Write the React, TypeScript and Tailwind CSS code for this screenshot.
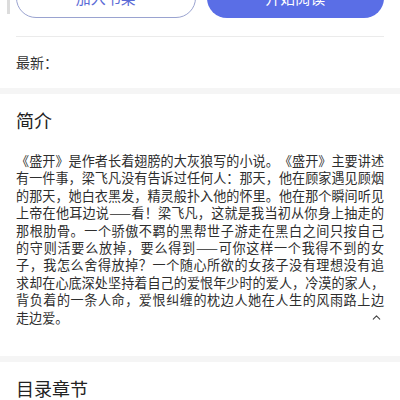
import { ChevronUp } from "lucide-react";

// intro is laid out line by line to keep the same breaks as the app
const INTRO_LINES = [
  "《盛开》是作者长着翅膀的大灰狼写的小说。《盛开》主要讲述",
  "有一件事，梁飞凡没有告诉过任何人：那天，他在顾家遇见顾烟",
  "的那天，她白衣黑发，精灵般扑入他的怀里。他在那个瞬间听见",
  "上帝在他耳边说——看！梁飞凡，这就是我当初从你身上抽走的",
  "那根肋骨。一个骄傲不羁的黑帮世子游走在黑白之间只按自己",
  "的守则活要么放掉，要么得到——可你这样一个我得不到的女",
  "子，我怎么舍得放掉？一个随心所欲的女孩子没有理想没有追",
  "求却在心底深处坚持着自己的爱恨年少时的爱人，冷漠的家人，",
  "背负着的一条人命，爱恨纠缠的枕边人她在人生的风雨路上边",
];
const INTRO_LAST = "走边爱。";

export default function App() {
  return (
    <div
      className="relative w-[400px] h-[400px] overflow-hidden bg-white text-[#333]"
      style={{ fontFamily: '"Noto Sans CJK SC", "Noto Sans", sans-serif' }}
    >
      <div className="absolute left-[7px] top-0 w-[3px] h-[14px] bg-[#dcdcdc]" />

      {/* actions */}
      <div className="px-4 -mt-[22px]">
        <div className="flex gap-[11px]">
          <button className="flex-1 h-10 rounded-full border border-[#9aa3d0] text-[#5b6bd6] text-[15px]">
            加入书架
          </button>
          <button className="flex-1 h-10 rounded-full bg-[#5a6ee6] text-white text-[15px]">
            开始阅读
          </button>
        </div>
        <div className="mt-[18px] border-t border-[#ebebeb]" />
        <div className="h-[51px] flex items-center text-[14px] text-[#333]">最新：</div>
      </div>

      <div className="h-[6px] bg-[#f5f5f5]" />

      {/* intro */}
      <div className="px-4 pt-[14px] pb-[30px]">
        <h2 className="text-[18px] leading-[24px] text-[#222]">简介</h2>
        <div className="mt-[20px] text-[13.1px] leading-[17.4px] text-[#2e2e2e] [text-spacing-trim:space-all]">
          {INTRO_LINES.map((line, i) => (
            <div key={i} className="whitespace-nowrap text-justify [text-align-last:justify]">
              {line}
            </div>
          ))}
          <div className="flex items-center justify-between">
            <span>{INTRO_LAST}</span>
            <ChevronUp className="text-[#444] mr-[1px]" size={13} strokeWidth={2} />
          </div>
        </div>
      </div>

      <div className="h-[6px] bg-[#f5f5f5]" />

      <div className="px-4 pt-[16px]">
        <h2 className="text-[18px] leading-[20px] text-[#222]">目录章节</h2>
      </div>
    </div>
  );
}
